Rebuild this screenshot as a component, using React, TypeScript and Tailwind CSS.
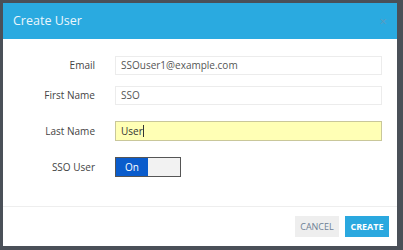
import React from "react";

export default function App() {
  const font = { fontFamily: '"Open Sans", "Noto Sans", sans-serif' };
  return (
    <div className="w-[403px] h-[250px] bg-[#4a5058] pt-[3px] pl-[3px] overflow-hidden" style={font}>
      <div className="w-[394px] h-[243px] bg-white flex flex-col">
        <div className="h-[36px] bg-[#2aaae0] flex items-center justify-between pl-[10px] pr-[10px]">
          <span className="text-[12.5px] text-[#eaf6fc]">Create User</span>
          <span className="text-[13px] text-[#5a9cc0] leading-none">×</span>
        </div>
        <div className="flex-1 flex flex-col pt-[17px]">
          <div className="flex items-center h-[19px]">
            <label className="w-[92px] text-right text-[10px] text-[#444]">Email</label>
            <div className="ml-[20px] w-[267px] h-[19px] border border-[#ececec] flex items-center px-[5px] text-[10px] text-[#555]">SSOuser1@example.com</div>
          </div>
          <div className="flex items-center h-[19px] mt-[11px]">
            <label className="w-[92px] text-right text-[10px] text-[#444]">First Name</label>
            <div className="ml-[20px] w-[267px] h-[19px] border border-[#ececec] flex items-center px-[5px] text-[10px] text-[#555]">SSO</div>
          </div>
          <div className="flex items-center h-[20px] mt-[16px]">
            <label className="w-[92px] text-right text-[10px] text-[#444]">Last Name</label>
            <div className="ml-[20px] w-[267px] h-[20px] border border-[#c9c79a] bg-[#ffffb5] flex items-center px-[5px] text-[10px] text-[#333]">
              User<span className="inline-block w-px h-[12px] bg-[#333]" />
            </div>
          </div>
          <div className="flex items-center h-[20px] mt-[16px]">
            <label className="w-[92px] text-right text-[10px] text-[#444]">SSO User</label>
            <div className="ml-[20px] w-[66px] h-[20px] border border-[#555] flex">
              <div className="w-[32px] bg-[#0a5ccc] text-white text-[10px] flex items-center justify-center">On</div>
              <div className="flex-1 bg-[#f2f2f2]" />
            </div>
          </div>
        </div>
        <div className="h-[40px] border-t border-[#eeeeee] flex items-start justify-end gap-[6px] pr-[8px] pt-[9px]">
          <button className="w-[44px] h-[21px] bg-[#eeeeee] text-[9px] text-[#6d7f95]">CANCEL</button>
          <button className="w-[44px] h-[21px] bg-[#2aa8df] text-[9px] font-bold text-white">CREATE</button>
        </div>
      </div>
    </div>
  );
}
